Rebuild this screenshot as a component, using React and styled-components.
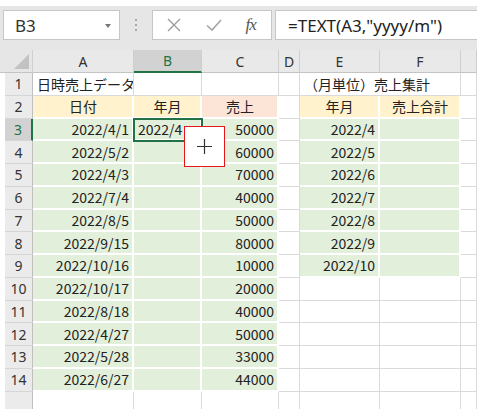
import styled, { createGlobalStyle } from "styled-components";

//==============================================================================
// STYLING
//==============================================================================
const GlobalStyle = createGlobalStyle`
  html, body {
    margin: 0;
    padding: 0;
    background: #ffffff;
  }
  body {
    font-family: "Noto Sans CJK JP", "Noto Sans", sans-serif;
  }
`

const Page = styled.div`
  position: relative;
  width: 477px;
  height: 409px;
  overflow: hidden;
  padding-top: 6px;
  box-sizing: border-box;
  background: #ffffff;
`

const Toolbar = styled.div`
  display: flex;
  align-items: center;
  height: 44px;
  padding: 4px 0 10px 3px;
  box-sizing: border-box;
  background: #e6e6e6;
`

const NameBox = styled.div`
  display: flex;
  align-items: center;
  justify-content: space-between;
  width: 117px;
  height: 30px;
  box-sizing: border-box;
  padding: 0 8px 0 11px;
  background: #ffffff;
  border: 1px solid #c6c6c6;
  font-family: "Noto Sans", sans-serif;
  font-size: 17px;
  color: #333;
`

const Caret = styled.span`
  width: 0;
  height: 0;
  border-left: 3px solid transparent;
  border-right: 3px solid transparent;
  border-top: 4px solid #777;
  margin-top: 2px;
`

const Dots = styled.div`
  display: flex;
  flex-direction: column;
  align-items: center;
  gap: 3px;
  width: 32px;

  span {
    width: 2px;
    height: 2px;
    background: #a8a8a8;
  }
`

const ButtonBox = styled.div`
  display: flex;
  align-items: center;
  justify-content: space-around;
  width: 120px;
  height: 30px;
  box-sizing: border-box;
  padding: 0 4px 0 2px;
  background: #ffffff;
  border: 1px solid #c6c6c6;
`

const Fx = styled.span`
  font-family: "Liberation Serif", serif;
  font-style: italic;
  font-size: 17px;
  color: #555;
  letter-spacing: -1px;
`

const FormulaBox = styled.div`
  display: flex;
  align-items: center;
  flex: 1;
  height: 30px;
  margin-left: 3px;
  padding-left: 12px;
  box-sizing: border-box;
  background: #ffffff;
  border: 1px solid #c6c6c6;
  border-right: none;
  font-family: "Noto Sans", sans-serif;
  font-size: 17px;
  color: #222;
  white-space: nowrap;
`

const Sheet = styled.div`
  display: grid;
  grid-template-columns: 33px 101px 68px 77px 21px 80px 81px 1fr;
  grid-template-rows: 23px;
  grid-auto-rows: 22.75px;
  font-size: 14px;
  color: #222;
`

const Corner = styled.div`
  position: relative;
  background: #e6e6e6;
  border-bottom: 1px solid #c4c4c4;
  border-right: 1px solid #cfcfcf;

  &::after {
    content: "";
    position: absolute;
    right: 3px;
    bottom: 3px;
    width: 0;
    height: 0;
    border-left: 15px solid transparent;
    border-bottom: 15px solid #c2c2c2;
  }
`

const ColHead = styled.div`
  display: flex;
  align-items: center;
  justify-content: center;
  background: ${p => (p.$selected ? "#d2d2d2" : "#e9e9e9")};
  border-right: 1px solid #cfcfcf;
  border-bottom: ${p => (p.$selected ? "2px solid #217346" : "1px solid #c4c4c4")};
  color: ${p => (p.$selected ? "#217346" : "#333")};
  font-family: "Noto Sans", sans-serif;
  font-size: 14px;
`

const RowHead = styled.div`
  display: flex;
  align-items: center;
  justify-content: center;
  margin-left: 5px;
  background: ${p => (p.$selected ? "#d2d2d2" : "#ebebeb")};
  border-bottom: 1px solid #d6d6d6;
  border-right: ${p => (p.$selected ? "2px solid #217346" : "1px solid #c0c0c0")};
  color: ${p => (p.$selected ? "#217346" : "#333")};
  font-family: "Noto Sans", sans-serif;
  font-size: 14px;
`

const fills = {
  green: "#e2efda",
  yellow: "#fff2cc",
  salmon: "#fce4d6",
}

const Cell = styled.div`
  position: relative;
  display: flex;
  align-items: center;
  justify-content: ${p =>
    p.$align === "right" ? "flex-end" : p.$align === "center" ? "center" : "flex-start"};
  padding: 0 3px 0 4px;
  box-sizing: border-box;
  white-space: nowrap;
  overflow: ${p => (p.$spill ? "visible" : "hidden")};
  background: ${p => (p.$fill ? fills[p.$fill] : "transparent")};
  border-right: ${p =>
    p.$spill ? "none" : p.$fill ? "2px solid #ffffff" : "1px solid #dadada"};
  border-bottom: ${p => (p.$fill ? "2px solid #ffffff" : "1px solid #dadada")};
  ${p =>
    p.$active &&
    `
    z-index: 2;
    outline: 2px solid #217346;
    outline-offset: -1px;
  `}
`

const Pointer = styled.div`
  position: absolute;
  left: 184px;
  top: 126px;
  width: 41px;
  height: 41px;
  box-sizing: border-box;
  display: flex;
  align-items: center;
  justify-content: center;
  background: #ffffff;
  border: 1.5px solid #e8141c;
  z-index: 5;
`

//==============================================================================
// DATA
//==============================================================================
const columns = ["A", "B", "C", "D", "E", "F", ""]

const dates = [
  "2022/4/1", "2022/5/2", "2022/4/3", "2022/7/4", "2022/8/5", "2022/9/15",
  "2022/10/16", "2022/10/17", "2022/8/18", "2022/4/27", "2022/5/28", "2022/6/27",
]
const sales = [
  "50000", "60000", "70000", "40000", "50000", "80000",
  "10000", "20000", "40000", "50000", "33000", "44000",
]
const months = ["2022/4", "2022/5", "2022/6", "2022/7", "2022/8", "2022/9", "2022/10"]

const buildRows = () => {
  const rows = []
  rows.push([
    { text: "日時売上データ" },
    {}, {}, {},
    { text: "（月単位）売上集計", spill: true },
    {}, {},
  ])
  rows.push([
    { text: "日付", fill: "yellow", align: "center" },
    { text: "年月", fill: "yellow", align: "center" },
    { text: "売上", fill: "salmon", align: "center" },
    {},
    { text: "年月", fill: "yellow", align: "center" },
    { text: "売上合計", fill: "yellow", align: "center" },
    {},
  ])
  dates.forEach((d, i) => {
    const m = months[i]
    rows.push([
      { text: d, fill: "green", align: "right" },
      i === 0 ? { text: "2022/4", fill: "green", active: true } : { fill: "green" },
      { text: sales[i], fill: "green", align: "right" },
      {},
      m ? { text: m, fill: "green", align: "right" } : {},
      m ? { fill: "green" } : {},
      {},
    ])
  })
  rows.push([{}, {}, {}, {}, {}, {}, {}])
  return rows
}

//==============================================================================
// APP
//==============================================================================
const App = () => {
  const rows = buildRows()
  return (
    <Page>
      <GlobalStyle/>
      <Toolbar>
        <NameBox>
          B3
          <Caret/>
        </NameBox>
        <Dots><span/><span/><span/></Dots>
        <ButtonBox>
          <svg width="16" height="16" viewBox="0 0 16 16">
            <path d="M2 2 L14 14 M14 2 L2 14" stroke="#9a9a9a" strokeWidth="1.3" fill="none"/>
          </svg>
          <svg width="18" height="16" viewBox="0 0 18 16">
            <path d="M2 8.5 L7 13 L16 3" stroke="#a6a6a6" strokeWidth="1.6" fill="none"/>
          </svg>
          <Fx>fx</Fx>
        </ButtonBox>
        <FormulaBox>=TEXT(A3,"yyyy/m")</FormulaBox>
      </Toolbar>

      <Sheet>
        <Corner/>
        {columns.map((c, i) => (
          <ColHead key={i} $selected={c === "B"}>{c}</ColHead>
        ))}
        {rows.map((row, r) => [
          <RowHead key={`h${r}`} $selected={r === 2}>{r < 14 ? r + 1 : ""}</RowHead>,
          ...row.map((cell, c) => (
            <Cell
              key={`${r}-${c}`}
              $fill={cell.fill}
              $align={cell.align}
              $spill={cell.spill}
              $active={cell.active}
            >
              {cell.text}
            </Cell>
          )),
        ])}
      </Sheet>

      <Pointer>
        <svg width="15" height="15" viewBox="0 0 15 15">
          <path d="M7.5 0 V15 M0 7.5 H15" stroke="#333" strokeWidth="1.2" fill="none"/>
        </svg>
      </Pointer>
    </Page>
  )
}

export default App;
